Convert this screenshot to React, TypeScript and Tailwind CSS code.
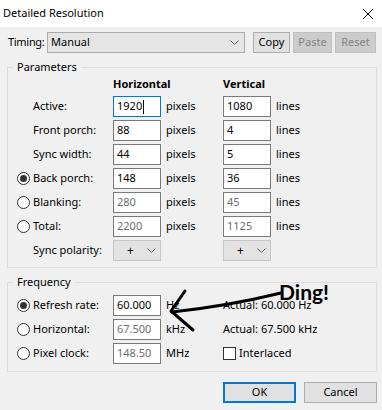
import React from 'react';

type BoxProps = {
  value: string;
  disabled?: boolean;
  focused?: boolean;
};

function Chevron() {
  return (
    <svg width="9" height="5" viewBox="0 0 9 5" className="shrink-0">
      <path d="M0.5 0.5 L4.5 4.5 L8.5 0.5" fill="none" stroke="#5f5f5f" strokeWidth="1" />
    </svg>
  );
}

function Radio({ checked }: { checked?: boolean }) {
  return (
    <div className="w-[13px] h-[13px] rounded-full border border-[#333333] bg-white flex items-center justify-center">
      {checked && <div className="w-[7px] h-[7px] rounded-full bg-[#333333]" />}
    </div>
  );
}

function TextBox({ value, disabled, focused }: BoxProps) {
  return (
    <div
      className={`w-[48px] h-[21px] bg-white border flex items-center pl-[3px] ${
        focused ? 'border-[#0078d7]' : 'border-[#7a7a7a]'
      } ${disabled ? 'text-[#6d6d6d]' : 'text-black'}`}
    >
      <span>{value}</span>
      {focused && <span className="w-px h-[14px] bg-black ml-px" />}
    </div>
  );
}

function Polarity() {
  return (
    <div className="w-[48px] h-[21px] bg-[#e3e3e3] border border-[#c6c6c6] flex items-center">
      <span className="w-[33px] text-center text-[12px]">+</span>
      <Chevron />
    </div>
  );
}

const rows = [
  { label: 'Active:', h: '1920', v: '1080', focused: true },
  { label: 'Front porch:', h: '88', v: '4' },
  { label: 'Sync width:', h: '44', v: '5' },
  { label: 'Back porch:', h: '148', v: '36', radio: true, checked: true },
  { label: 'Blanking:', h: '280', v: '45', radio: true, disabled: true },
  { label: 'Total:', h: '2200', v: '1125', radio: true, disabled: true },
];

const cols = 'grid grid-cols-[20px_80px_48px_62px_48px_1fr] items-center';

export default function App() {
  return (
    <div className="relative w-[382px] h-[410px] overflow-hidden bg-[#f0f0f0] text-[11px] text-black font-['Noto_Sans',sans-serif]">
      {/* Title bar */}
      <div className="h-[27px] bg-white flex items-center justify-between pl-[3px] pr-[9px]">
        <span>Detailed Resolution</span>
        <svg width="10" height="10" viewBox="0 0 10 10">
          <path d="M0 0 L10 10 M10 0 L0 10" stroke="#000" strokeWidth="1" />
        </svg>
      </div>

      <div className="pl-[7px] pr-[5px]">
        {/* Timing */}
        <div className="mt-[5px] h-[21px] flex items-center">
          <span className="w-[40px] shrink-0 pl-px whitespace-nowrap tracking-[-0.3px]">Timing:</span>
          <div className="w-[198px] shrink-0 h-[21px] bg-[#e5e5e5] border border-[#acacac] flex items-center justify-between pl-[3px] pr-[5px]">
            <span>Manual</span>
            <Chevron />
          </div>
          <button className="ml-[8px] w-[37px] h-[21px] bg-[#e1e1e1] border border-[#adadad]">Copy</button>
          <button className="ml-[3px] w-[39px] h-[21px] bg-[#cccccc] border border-[#bfbfbf] text-[#838383]">Paste</button>
          <button className="ml-[3px] w-[41px] h-[21px] bg-[#cccccc] border border-[#bfbfbf] text-[#838383]">Reset</button>
        </div>

        {/* Parameters */}
        <fieldset className="mt-[6px] border border-[#dcdcdc] pl-[5px] pb-[6px]">
          <legend className="px-[4px] leading-[16px]">Parameters</legend>
          <div className={`${cols} h-[18px] font-bold`}>
            <span />
            <span />
            <span className="col-span-2">Horizontal</span>
            <span className="col-span-2">Vertical</span>
          </div>
          <div className={`${cols} auto-rows-[21px] gap-y-[3px] mt-[3px]`}>
            {rows.map((r) => (
              <React.Fragment key={r.label}>
                <div className="pl-[4px]">{r.radio && <Radio checked={r.checked} />}</div>
                <span>{r.label}</span>
                <TextBox value={r.h} disabled={r.disabled} focused={r.focused} />
                <span className="pl-[5px]">pixels</span>
                <TextBox value={r.v} disabled={r.disabled} />
                <span className="pl-[5px]">lines</span>
              </React.Fragment>
            ))}
            <div />
            <span>Sync polarity:</span>
            <Polarity />
            <span />
            <Polarity />
            <span />
          </div>
        </fieldset>

        {/* Frequency */}
        <fieldset className="mt-[6px] border border-[#dcdcdc] pl-[5px] pb-[7px]">
          <legend className="px-[4px] leading-[16px]">Frequency</legend>
          <div className={`${cols} auto-rows-[21px] gap-y-[3px] mt-[5px]`}>
            <div className="pl-[4px]"><Radio checked /></div>
            <span>Refresh rate:</span>
            <TextBox value="60.000" />
            <span className="pl-[5px]">Hz</span>
            <span className="col-span-2">Actual: 60.000 Hz</span>

            <div className="pl-[4px]"><Radio /></div>
            <span>Horizontal:</span>
            <TextBox value="67.500" disabled />
            <span className="pl-[5px]">kHz</span>
            <span className="col-span-2">Actual: 67.500 kHz</span>

            <div className="pl-[4px]"><Radio /></div>
            <span>Pixel clock:</span>
            <TextBox value="148.50" disabled />
            <span className="pl-[5px]">MHz</span>
            <div className="col-span-2 flex items-center">
              <div className="w-[13px] h-[13px] bg-white border border-[#333333]" />
              <span className="ml-[3px]">Interlaced</span>
            </div>
          </div>
        </fieldset>

        {/* Buttons */}
        <div className="mt-[10px] flex justify-end">
          <button className="w-[73px] h-[21px] bg-[#e1e1e1] border-2 border-[#0078d7]">OK</button>
          <button className="ml-[8px] w-[73px] h-[21px] bg-[#e1e1e1] border border-[#adadad]">Cancel</button>
        </div>
      </div>

      {/* Hand-drawn annotation */}
      <svg className="absolute inset-0 pointer-events-none" width="382" height="410">
        <g fill="none" stroke="#000" strokeWidth="3" strokeLinecap="round" strokeLinejoin="round">
          <path d="M172 312 Q 228 306 281 293" />
          <path d="M185 291 L171 311 L193 330" />
        </g>
      </svg>
      <span className="absolute left-[279px] top-[281px] leading-[21px] text-[21px] font-bold font-['Lato',sans-serif]">
        Ding!
      </span>
    </div>
  );
}
